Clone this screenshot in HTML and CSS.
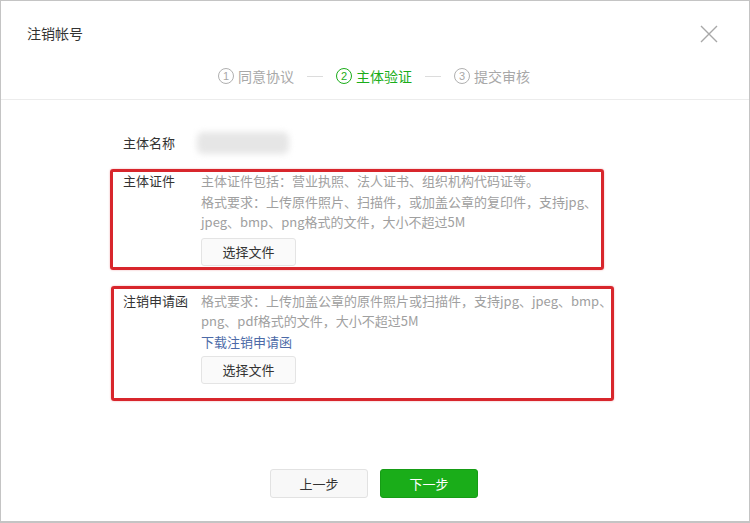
FILE: index.html
```html
<!DOCTYPE html>
<html lang="zh-CN">
<head>
<meta charset="utf-8">
<title>注销帐号</title>
<link rel="stylesheet" href="styles.css">
</head>
<body>
<div class="dialog">
  <div class="head">
    <div class="title">注销帐号</div>
    <svg class="close" width="20" height="20" viewBox="0 0 20 20"><path d="M2 2L18 18M18 2L2 18" stroke="#a8a8a8" stroke-width="1.4" fill="none"/></svg>
    <div class="steps">
      <div class="step"><span class="num">1</span>同意协议</div>
      <span class="sep"></span>
      <div class="step on"><span class="num">2</span>主体验证</div>
      <span class="sep"></span>
      <div class="step"><span class="num">3</span>提交审核</div>
    </div>
  </div>
  <div class="body">
    <div class="row name-row">
      <div class="label">主体名称</div>
      <div class="blur"></div>
    </div>
    <div class="box box1">
      <div class="label">主体证件</div>
      <div class="content">
        <div class="line">主体证件包括：营业执照、法人证书、组织机构代码证等。</div>
        <div class="line">格式要求：上传原件照片、扫描件，或加盖公章的复印件，支持jpg、</div>
        <div class="line">jpeg、bmp、png格式的文件，大小不超过5M</div>
        <div class="btn-file">选择文件</div>
      </div>
    </div>
    <div class="box box2">
      <div class="label">注销申请函</div>
      <div class="content">
        <div class="line">格式要求：上传加盖公章的原件照片或扫描件，支持jpg、jpeg、bmp、</div>
        <div class="line">png、pdf格式的文件，大小不超过5M</div>
        <div class="line link">下载注销申请函</div>
        <div class="btn-file">选择文件</div>
      </div>
    </div>
  </div>
  <div class="foot">
    <div class="btn prev">上一步</div>
    <div class="btn next">下一步</div>
  </div>
</div>
</body>
</html>
```
FILE: styles.css
```css
html, body {
  margin: 0;
  padding: 0;
  background: #fff;
}
body {
  font-family: "Noto Sans CJK SC", "Noto Sans", "Liberation Sans", sans-serif;
  color: #333;
}
.dialog {
  width: 750px;
  height: 523px;
  box-sizing: border-box;
  border: 1px solid #c4c4c4;
  border-bottom: 2px solid #c4c4c4;
  display: flex;
  flex-direction: column;
}
.head {
  height: 98px;
  border-bottom: 1px solid #ececec;
  position: relative;
  flex: none;
}
.title {
  padding: 23px 0 0 26px;
  font-size: 14px;
  line-height: 18px;
}
.close {
  position: absolute;
  right: 30px;
  top: 23px;
}
.steps {
  display: flex;
  justify-content: center;
  align-items: center;
  margin-top: 25px;
  margin-left: -2px;
  height: 18px;
  font-size: 14px;
  color: #a8a8a8;
}
.step {
  display: flex;
  align-items: center;
  white-space: nowrap;
}
.num {
  display: inline-block;
  box-sizing: border-box;
  width: 16px;
  height: 16px;
  border: 1px solid #b0b0b0;
  border-radius: 50%;
  font-size: 11px;
  line-height: 14px;
  text-align: center;
  margin-right: 4px;
  font-family: "Liberation Sans", sans-serif;
}
.step.on {
  color: #1aad19;
}
.step.on .num {
  border-color: #1aad19;
}
.sep {
  width: 16px;
  height: 1px;
  background: #dcdcdc;
  margin: 0 13px;
}
.body {
  padding: 33px 0 0 108px;
  font-size: 13px;
}
.row, .box {
  display: flex;
}
.label {
  width: 78px;
  flex: none;
  line-height: 20px;
  color: #333;
}
.name-row {
  padding-left: 14px;
}
.blur {
  width: 92px;
  height: 22px;
  margin: -1px 0 0 -4px;
  background: #e6e6e6;
  border-radius: 6px;
  filter: blur(3px);
}
.box {
  border: 3px solid #d8262c;
  border-radius: 3px;
  box-shadow: 0 0 2px rgba(216, 38, 44, 0.4);
}
.box1 {
  width: 494px;
  box-sizing: border-box;
  margin-top: 15px;
  margin-left: 1px;
  padding: 0 0 1px 10px;
}
.box1 .label {
  margin-top: -1px;
}
.box2 {
  width: 503px;
  box-sizing: border-box;
  margin-top: 16px;
  margin-left: 2px;
  padding: 2px 0 14px 9px;
}
.content {
  color: #a0a0a0;
}
.box1 .content {
  margin-top: -1px;
}
.line {
  line-height: 20.5px;
  white-space: nowrap;
}
.link {
  color: #4c6aa7;
}
.btn-file {
  margin-top: 4px;
  width: 95px;
  height: 28px;
  box-sizing: border-box;
  border: 1px solid #e4e4e4;
  border-radius: 3px;
  background: #fafafa;
  color: #333;
  text-align: center;
  line-height: 26px;
}
.box1 .btn-file {
  margin-top: 5px;
}
.foot {
  margin-top: auto;
  display: flex;
  justify-content: center;
  gap: 12px;
  padding: 0 0 23px 0;
  margin-left: -2px;
}
.btn {
  width: 98px;
  height: 29px;
  box-sizing: border-box;
  border-radius: 3px;
  text-align: center;
  line-height: 27px;
  font-size: 13px;
}
.prev {
  background: #f8f8f8;
  border: 1px solid #e2e2e2;
  color: #333;
}
.next {
  background: #1aad19;
  border: 1px solid #169c15;
  color: #fff;
}
```
